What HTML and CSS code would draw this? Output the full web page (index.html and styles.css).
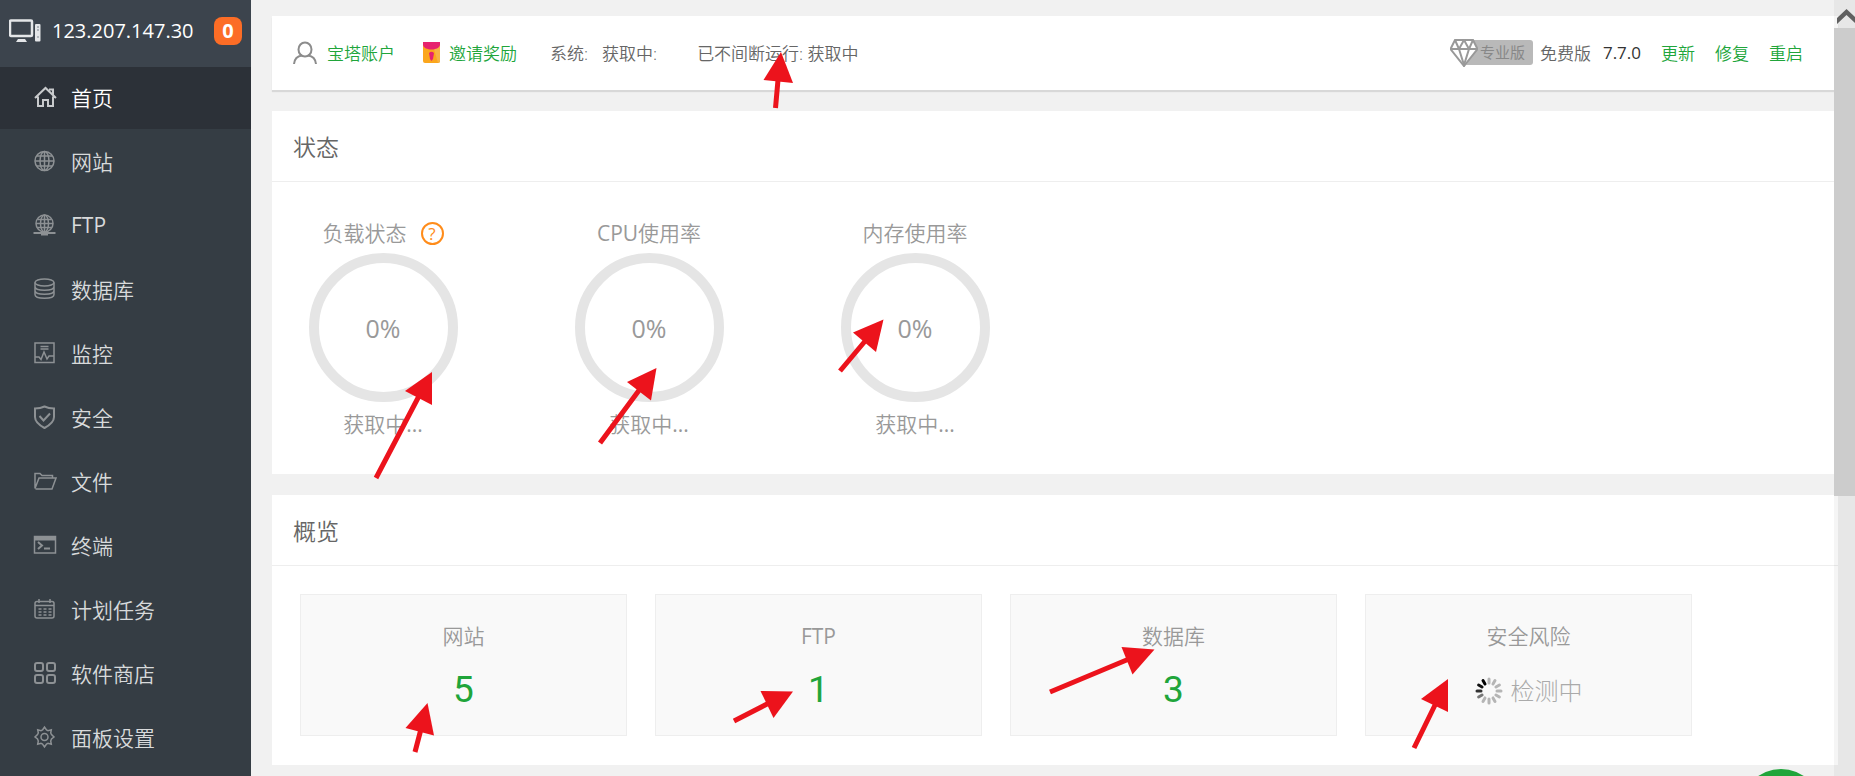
FILE: index.html
```html
<!DOCTYPE html>
<html lang="zh-CN">
<head>
    <meta charset="UTF-8">
    <meta name="viewport" content="width=device-width, initial-scale=1.0">
    <title>宝塔面板</title>
    <link rel="stylesheet" href="styles.css">
</head>
<body>

<div class="layout">
    <aside class="sidebar">
        <div class="server">
            <svg class="server-icon" width="32" height="24" viewBox="0 0 32 24">
                <rect x="1" y="1.500" width="22" height="15.500" rx="1" fill="none" stroke="#e4e6e8" stroke-width="2.500"/>
                <path d="M9 20h7l2 3H7z" fill="#e4e6e8"/>
                <rect x="26" y="5" width="5.500" height="17.500" rx="1" fill="#e4e6e8"/>
                <path d="M28 8h2M28 11h2" stroke="#777f88"/>
                <circle cx="29" cy="18" r="1" fill="#a0a6ac"/>
            </svg>
            <span class="server-ip">123.207.147.30</span>
            <span class="msg-count">0</span>
        </div>
        <nav class="menu">
            <a class="menu-item active" href="#">
                <svg class="menu-icon" viewBox="0 0 24 24"><path d="M2 13 12.500 3 23 13M16 4.500h4v5M5 11.500V21h5v-6h5v6h5v-9.500"/></svg>首页
            </a>
            <a class="menu-item" href="#">
                <svg class="menu-icon" viewBox="0 0 24 24"><circle cx="11.500" cy="12" r="9.500"/><ellipse cx="11.500" cy="12" rx="4.500" ry="9.500"/><path d="M2 12h19M11.500 2.500v19M4 7h15M4 17h15"/></svg>网站
            </a>
            <a class="menu-item" href="#">
                <svg class="menu-icon" viewBox="0 0 24 24"><circle cx="11.500" cy="10.500" r="8.500"/><ellipse cx="11.500" cy="10.500" rx="4" ry="8.500"/><path d="M3 10.500h17M11.500 2v17M5 6.500h13M5 14.500h13"/><path d="M.5 20h22" stroke-width="2"/><path d="M8 20.500h7" stroke-width="4"/></svg><span class="en">FTP</span>
            </a>
            <a class="menu-item" href="#">
                <svg class="menu-icon" viewBox="0 0 24 24"><ellipse cx="11.500" cy="5.500" rx="9.500" ry="3.500"/><path d="M2 5.500v12c0 5 19 5 19 0v-12M2 9.500c0 5 19 5 19 0M2 13.500c0 5 19 5 19 0"/></svg>数据库
            </a>
            <a class="menu-item" href="#">
                <svg class="menu-icon" viewBox="0 0 24 24"><path d="M2 2h19v19.500H2zM2 16h4l2 2.500 3-7.500 3 7 2-3h5M7.500 5.500h8M7.500 8h8"/></svg>监控
            </a>
            <a class="menu-item" href="#">
                <svg class="menu-icon" viewBox="0 0 24 24"><path stroke-width="2" d="M11.500 1.500c3 1.500 6 2 9.500 2V12c0 5-4 8-9.500 11C6 20 2 17 2 12V3.500c3.500 0 6.500-.5 9.500-2zM6.500 11l4 4.500 6.500-7"/></svg>安全
            </a>
            <a class="menu-item" href="#">
                <svg class="menu-icon" viewBox="0 0 24 24"><path d="M2 19.500V4.500h5l2 2h10.500v2.500M2 19.500 6 9h17l-4 11H2.500"/></svg>文件
            </a>
            <a class="menu-item" href="#">
                <svg class="menu-icon" viewBox="0 0 24 24"><path d="M1.500 3.500h21V20h-21z"/><path d="M1 5.500h22" stroke-width="4"/><path stroke-width="2" d="m5 9 4 3.500L5 16M11 15.500h6"/></svg>终端
            </a>
            <a class="menu-item" href="#">
                <svg class="menu-icon" viewBox="0 0 24 24"><rect x="2" y="4.500" width="19" height="16.500" rx="2"/><path d="M2 8.500h19M6 2v4M17 2v4"/><path stroke-dasharray="3 2" d="M5.500 12h13M5.500 15h13M5.500 18h13"/></svg>计划任务
            </a>
            <a class="menu-item" href="#">
                <svg class="menu-icon" viewBox="0 0 24 24"><g stroke-width="2"><rect x="2" y="2" width="8" height="8" rx="2"/><rect x="14" y="2" width="8" height="8" rx="2"/><rect x="2" y="14" width="8" height="8" rx="2"/><rect x="14" y="14" width="8" height="8" rx="2"/></g></svg>软件商店
            </a>
            <a class="menu-item" href="#">
                <svg class="menu-icon" viewBox="0 0 24 24"><circle cx="11.500" cy="12" r="3.500"/><path d="M9.500 5 11.500 2l2 3 1.500.6 3.300-.9-.6 3.300.8 1.500 2.500 2.500-2.500 2-.8 2 .6 3.300-3.300-.9-1.500.6-2 3-2-3-1.500-.6-3.300.9.600-3.300-.8-2-2.500-2L4.500 9.500 5.300 8l-.6-3.300 3.300.9z"/></svg>面板设置
            </a>
        </nav>
    </aside>

    <main class="content">
        <header class="topbar">
            <a class="account" href="#">
                <svg width="24" height="24" viewBox="0 0 24 24" fill="none" stroke="#8c8c8c" stroke-width="2"><ellipse cx="12" cy="8.500" rx="6.500" ry="7"/><path d="M1 23c.5-5 3.500-8 8-8.500M23 23c-.5-5-3.500-8-8-8.500"/></svg>
                宝塔账户
            </a>
            <a class="invite" href="#">
                <svg width="18" height="22" viewBox="0 0 18 22"><rect width="17" height="21" rx="2" fill="#fba61c"/><path d="M9 0h6a2 2 0 0 1 2 2v17a2 2 0 0 1-2 2z" fill="#f7b344"/><path d="M0 0h17v3c-1 6-16 6-17 0z" fill="#e6226e"/><path d="M6 11q2.500-2.500 5 0l-1 6-1.500 2L7 17z" fill="#e6226e"/></svg>
                邀请奖励
            </a>
            <span class="sys-label">系统:</span>
            <span class="sys-value">获取中:</span>
            <span class="uptime">已不间断运行: 获取中</span>

            <div class="version">
                <a class="pro" href="#">
                    <svg class="gem" width="28" height="28" viewBox="0 0 28 28"><path d="M5 1h18l4.500 9L14 27 .5 10z" fill="#fff" stroke="#999" stroke-width="2"/><path d="M1 10h26M5 1l4 9 5-9 5 9 4-9M9 10l5 16 5-16" fill="none" stroke="#999" stroke-width="2"/></svg>
                    <span class="pro-text">专业版</span>
                </a>
                <span class="free">免费版</span>
                <span class="number">7.7.0</span>
                <a href="#">更新</a>
                <a href="#">修复</a>
                <a href="#">重启</a>
            </div>
        </header>

        <section class="panel">
            <h2 class="panel-title">状态</h2>
            <div class="gauges">
                <div class="gauge">
                    <div class="gauge-name">负载状态 <a class="help" href="#">?</a></div>
                    <div class="ring">0%</div>
                    <div class="gauge-info">获取中<span class="en">...</span></div>
                </div>
                <div class="gauge">
                    <div class="gauge-name"><span><span class="en">CPU</span>使用率</span></div>
                    <div class="ring">0%</div>
                    <div class="gauge-info">获取中<span class="en">...</span></div>
                </div>
                <div class="gauge">
                    <div class="gauge-name">内存使用率</div>
                    <div class="ring">0%</div>
                    <div class="gauge-info">获取中<span class="en">...</span></div>
                </div>
            </div>
        </section>

        <section class="panel">
            <h2 class="panel-title">概览</h2>
            <div class="stats">
                <div class="stat">
                    <div class="stat-name">网站</div>
                    <a class="stat-num" href="#">5</a>
                </div>
                <div class="stat">
                    <div class="stat-name en">FTP</div>
                    <a class="stat-num" href="#">1</a>
                </div>
                <div class="stat">
                    <div class="stat-name">数据库</div>
                    <a class="stat-num" href="#">3</a>
                </div>
                <div class="stat">
                    <div class="stat-name">安全风险</div>
                    <div class="checking">
                        <svg width="28" height="28" viewBox="-14 -14 28 28" stroke="#b5b5b5" stroke-width="3" stroke-linecap="round">
                            <path d="M0-8v-4"/>
                            <path d="M0-8v-4" transform="rotate(30)"/>
                            <path d="M0-8v-4" transform="rotate(60)"/>
                            <path d="M0-8v-4" transform="rotate(90)"/>
                            <path d="M0-8v-4" transform="rotate(120)"/>
                            <path d="M0-8v-4" transform="rotate(150)"/>
                            <path d="M0-8v-4" transform="rotate(180)"/>
                            <path d="M0-8v-4" transform="rotate(210)"/>
                            <path d="M0-8v-4" transform="rotate(240)" stroke="#777"/>
                            <path d="M0-8v-4" transform="rotate(270)" stroke="#333"/>
                            <path d="M0-8v-4" transform="rotate(300)" stroke="#111"/>
                            <path d="M0-8v-4" transform="rotate(330)" stroke="#000"/>
                        </svg>
                        检测中
                    </div>
                </div>
            </div>
        </section>
    </main>
</div>

<button class="service" type="button" aria-label="客服"></button>

<div class="scrollbar">
    <svg class="scroll-up" width="21" height="28" viewBox="0 0 21 28"><path d="M3 24v-6l9.500-9L22 18v6l-9.500-9z" fill="#606060"/></svg>
    <div class="scroll-thumb"></div>
</div>

<!-- red marker arrows -->
<svg class="arrows" width="1500" height="776" viewBox="0 0 1500 776">
    <g stroke="#ec131c" stroke-width="5">
        <path d="M775.500 108 778 80M376 478 419 396M600 443 640 389M840 371 866 340M415 752 421 729M734 721 769 703M1050 692 1129 659M1414 748 1436 703"/>
    </g>
    <g fill="#ec131c">
        <path d="M781 52 793 83 763.500 80z"/>
        <path d="M432 372v33l-27-14z"/>
        <path d="M656.500 368 651 400.500 627 382z"/>
        <path d="M883.500 319.500 876 352 853 332.500z"/>
        <path d="M427.500 703 434 735.500 405.500 728z"/>
        <path d="M793 691.500 773.500 718 760.500 691z"/>
        <path d="M1154.500 649.500 1132.500 674.500 1121.500 647z"/>
        <path d="M1448 679v33l-27-13z"/>
    </g>
</svg>

</body>
</html>
```
FILE: styles.css
```css
* {
    box-sizing: border-box;
}
body {
    margin: 0;
    font-family: "Open Sans", "Noto Sans CJK SC", sans-serif;
    font-size: 17px;
    font-weight: 350;
    color: #666;
    background: #f1f1f1;
    overflow: hidden;
}
a {
    color: #20a53a;
    text-decoration: none;
}
/* latin text looks too thin at the chinese weight */
.en {
    font-weight: normal;
}
.layout {
    display: flex;
    height: 100vh;
}

/* sidebar */
.sidebar {
    flex: none;
    width: 251px;
    background: #353d44;
}
.server {
    display: flex;
    align-items: center;
    height: 67px;
    padding: 0 9px 6px;
    background: #3c444d;
    color: #fff;
    font-size: 20px;
    font-weight: normal;
}
.server-ip {
    margin-left: 11px;
}
.msg-count {
    width: 28px;
    margin-left: auto;
    border-radius: 8px;
    background: #fc6d26;
    font-weight: bold;
    line-height: 28px;
    text-align: center;
}
.menu {
    display: flex;
    flex-direction: column;
    gap: 2px;
}
.menu-item {
    display: flex;
    align-items: center;
    gap: 14px;
    height: 62px;
    padding: 0 0 2px 33px;
    color: #d8dadb;
    font-size: 21px;
}
.menu-item.active {
    background: #2c3138;
    color: #fff;
}
.menu-icon {
    width: 24px;
    height: 24px;
    fill: none;
    stroke: #8d9194;
    stroke-width: 1.5;
}
.active .menu-icon {
    stroke: #c8cacc;
    stroke-width: 2;
}

/* content */
.content {
    flex: 1;
    padding: 16px 17px 0 21px;
}
.topbar {
    display: flex;
    align-items: center;
    height: 74px;
    margin-bottom: 21px;
    padding: 0 35px 1px 21px;
    background: #fff;
    box-shadow: 0 2px 1px rgba(0, 0, 0, 0.1);
    white-space: nowrap;
}
.account, .invite {
    display: flex;
    align-items: center;
    gap: 10px;
}
.invite {
    gap: 8px;
    margin-left: 28px;
}
.sys-label {
    margin-left: 33px;
}
.sys-value {
    margin-left: 14px;
}
.uptime {
    margin-left: 40px;
}
.version {
    display: flex;
    align-items: center;
    gap: 20px;
    margin-left: auto;
}
.pro {
    display: flex;
    align-items: center;
    margin-right: -13px;
}
.gem {
    position: relative;
}
.pro-text {
    height: 25px;
    margin-left: -14px;
    padding: 0 8px 0 16px;
    border-radius: 3px;
    background: #b9b9b9;
    color: #888;
    font-size: 15px;
    font-weight: normal;
    line-height: 25px;
}
.free {
    margin-right: -8px;
}
.number {
    color: #333;
    font-weight: normal;
}
.panel {
    margin-bottom: 21px;
    background: #fff;
}
.panel-title {
    height: 71px;
    margin: 0;
    padding-left: 21px;
    border-bottom: 1px solid #eee;
    font-size: 23px;
    font-weight: inherit;
    line-height: 72px;
}

/* load / cpu / memory */
.gauges {
    display: flex;
    gap: 54px;
    padding: 35px 5px 34px;
    color: #999;
    font-size: 21px;
    line-height: 32px;
}
.gauge {
    display: flex;
    flex-direction: column;
    align-items: center;
    width: 212px;
}
.gauge-name {
    display: flex;
    align-items: center;
    gap: 14px;
}
.help {
    width: 23px;
    height: 23px;
    border: 2px solid #ff8c1a;
    border-radius: 50%;
    color: #ff8c1a;
    font-size: 17px;
    font-weight: normal;
    line-height: 19px;
    text-align: center;
}
.ring {
    width: 149px;
    height: 149px;
    margin: 4px 0 6px;
    border: 10px solid #e5e5e5;
    border-radius: 50%;
    font-size: 25px;
    font-weight: normal;
    line-height: 130px;
    text-align: center;
}

/* overview */
.stats {
    display: flex;
    gap: 28px;
    padding: 28px 28px 29px;
}
.stat {
    width: 327px;
    height: 142px;
    padding-top: 25px;
    border: 1px solid #eee;
    background: #f9f9f9;
    color: #999;
    font-size: 21px;
    line-height: 32px;
    text-align: center;
}
.stat-num {
    display: block;
    margin-top: 14px;
    font-family: Roboto, sans-serif;
    font-size: 37px;
    font-weight: normal;
    line-height: 48px;
}
.checking {
    display: flex;
    align-items: center;
    justify-content: center;
    gap: 8px;
    margin-top: 15px;
    color: #aaa;
    font-size: 24px;
    font-weight: 300;
    line-height: 48px;
}

/* floating */
.service {
    position: fixed;
    right: 34px;
    bottom: -73px;
    width: 80px;
    height: 80px;
    border: 0;
    border-radius: 50%;
    background: #20a53a;
}
.scrollbar {
    position: fixed;
    top: 0;
    right: 0;
    bottom: 0;
    width: 21px;
    background: rgba(0, 0, 0, 0.04);
}
.scroll-up {
    display: block;
}
.scroll-thumb {
    height: 468px;
    background: #ccc;
}
.arrows {
    position: absolute;
    top: 0;
    left: 0;
    pointer-events: none;
}
```
